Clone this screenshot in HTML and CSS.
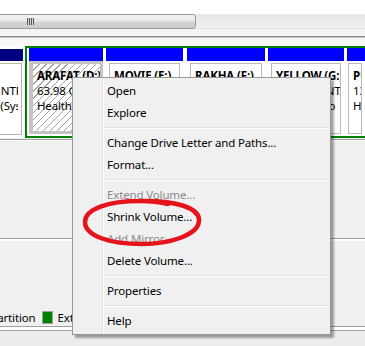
FILE: index.html
```html
<!DOCTYPE html>
<html lang="en">
<head>
  <meta charset="UTF-8" />
  <title>Disk Management</title>
  <link rel="stylesheet" href="styles.css">
</head>
<body>
  <div class="screen">
    <div class="top-gap"></div>
    <div class="hscroll"><div class="thumb"><span class="grip"></span></div></div>
    <div class="band"></div>
    <div class="rule"></div>
    <div class="band light"></div>

    <div class="disk">
      <div class="sys">
        <div class="vhead navy"></div>
        <div class="sys-body"><div class="sys-text"><div class="sys-clip"><b>(C:)</b><span class="l2">50.00 GB NTFS</span><span class="l3">Healthy (System, Boot)</span></div></div></div>
      </div>
      <div class="ext">
        <div class="vol w74 selected">
          <div class="vhead"></div>
          <div class="vbody"><div class="vbox"><b>ARAFAT (D:)</b><span>63.98 GB NTFS</span><span>Healthy (Logical Drive)</span></div></div>
        </div>
        <div class="vol w77">
          <div class="vhead"></div>
          <div class="vbody"><div class="vbox"><b>MOVIE (E:)</b><span>97.66 GB NTFS</span><span>Healthy (Logical Drive)</span></div></div>
        </div>
        <div class="vol w78">
          <div class="vhead"></div>
          <div class="vbody"><div class="vbox"><b>RAKHA (F:)</b><span>97.66 GB NTFS</span><span>Healthy (Logical Drive)</span></div></div>
        </div>
        <div class="vol w76">
          <div class="vhead"></div>
          <div class="vbody"><div class="vbox"><b>YELLOW (G:)</b><span>97.66 GB NTFS</span><span>Healthy (Lo</span></div></div>
        </div>
        <div class="vol last">
          <div class="vhead"></div>
          <div class="vbody"><div class="vbox"><b>PUBLIC (H:)</b><span>136.7 GB NTFS</span><span>Healthy (Logical Drive)</span></div></div>
        </div>
      </div>
    </div>

    <div class="lower">
      <div class="empty"></div>
      <div class="hline"></div>
      <div class="empty short"></div>
      <div class="legend">
        <div class="legend-row">
          <span class="swatch navy"></span><span>Primary partition</span>
          <span class="swatch green"></span><span>Extended partition</span>
        </div>
      </div>
      <div class="frame-lines"></div>
      <div class="bottom"></div>
    </div>

    <div class="menu">
      <div class="item">Open</div>
      <div class="item">Explore</div>
      <div class="sep"></div>
      <div class="item">Change Drive Letter and Paths...</div>
      <div class="item">Format...</div>
      <div class="sep"></div>
      <div class="item off">Extend Volume...</div>
      <div class="item">Shrink Volume...</div>
      <div class="item off">Add Mirror...</div>
      <div class="item">Delete Volume...</div>
      <div class="sep"></div>
      <div class="item">Properties</div>
      <div class="sep"></div>
      <div class="item">Help</div>
    </div>

    <svg class="circle" width="126" height="50" viewBox="0 0 126 50">
      <path d="M60 3 C 96 2, 120 10, 119 23 C 118 37, 90 46, 62 46 C 30 46, 5 38, 5 24 C 5 11, 28 3, 60 3 C 70 3, 80 4, 88 6" fill="none" stroke="#e5141c" stroke-width="4.5" stroke-linecap="round"/>
    </svg>
  </div>
</body>
</html>
```
FILE: styles.css
```css
*{margin:0;padding:0;box-sizing:border-box}
body{background:#f0f0f0;font-family:"Noto Sans","Open Sans",sans-serif;font-size:11.5px;letter-spacing:-.15px;color:#000}
.screen{position:relative;width:365px;height:346px;overflow:hidden;background:#f0f0f0}

/* scroll strip at the top */
.top-gap{height:14px;background:#fff}
.hscroll{height:15px;background:linear-gradient(#e6e6e6,#f0f0f0);border-bottom:1px solid #e2e2e2}
.thumb{width:199px;height:15px;margin-left:-3px;border:1px solid #9a9a9a;border-radius:3px;background:linear-gradient(#f4f4f4 0,#e8e8e8 45%,#d4d4d4 55%,#cbcbcb 100%);position:relative}
.grip{position:absolute;left:29px;top:3px;width:7px;height:7px;background:repeating-linear-gradient(90deg,#555 0 1px,#d8d8d8 1px 2px)}
.band{height:7px;background:#f4f4f4}
.band.light{height:8px;background:#f7f7f7}
.rule{height:2px;background:#8a8a8a;border-bottom:1px solid #c4c4c4}

/* disk row */
.disk{display:flex;height:93px;background:#fff;border-bottom:1px solid #f0f0f0}
.sys{width:23px;flex:none;margin-right:2px;padding-top:3px;display:flex;flex-direction:column;overflow:hidden}
.vhead{height:13px;background:#0000ff;flex:none}
.vhead.navy{height:12px;background:#000080}
.sys-body{flex:1;background:#fff;padding:2px 1px 3px 0;display:flex;min-width:0}
.sys-body .sys-text{flex:1;min-width:0;border:1px solid #b4b4b4;border-left:none;padding-top:4px;display:flex}
.sys-clip{flex:1;min-width:0;overflow:hidden;margin-right:3px}
.sys-text b,.sys-text span,.vbox b,.vbox span{display:block;white-space:nowrap;line-height:15px}
.sys-text b{margin-left:-47px}
.sys-text .l2{margin-left:-49px}
.sys-text .l3{margin-left:-43px}

.ext{flex:1;display:flex;gap:3px;border:2px solid #008000;border-right:none;padding-left:2px;background:#fff;min-width:0}
.vol{display:flex;flex-direction:column;flex:none}
.w74{width:74px}.w77{width:77px;margin-right:1px}.w78{width:78px}.w76{width:76px}
.vol.last{flex:1;min-width:0}
.vbody{flex:1;padding:2px 3px 2px 3px;display:flex;min-height:0}
.vol.last .vbody{padding-left:1px}
.vbox{flex:1;border:1px solid #b9b9b9;background:#fff;overflow:hidden;padding:4px 0 0 4px;min-width:0}
.vbox b{font-weight:700}
.selected .vbody{background:#c4c4c4;padding:3px 3px 3px 4px;margin-bottom:2px}
.selected .vbox{border:none;padding:4px 0 0 4px;background:#fff repeating-linear-gradient(135deg,#fff 0 4px,#a6a6a6 4px 5px)}

/* lower area */
.lower{display:flex;flex-direction:column;height:207px;border-top:1px solid #a0a0a0}
.empty{height:98px;border-top:1px solid #fff}
.empty.short{height:68px}
.hline{height:2px;border-top:1px solid #a0a0a0;border-bottom:1px solid #fff}
.legend{height:18px;overflow:hidden;display:flex;align-items:center}
.legend-row{display:flex;align-items:center;gap:5px;margin-left:-70px;white-space:nowrap}
.legend-row span:nth-child(3){margin-left:1px}
.swatch{width:11px;height:13px;border:1px solid #a0a0a0;flex:none}
.swatch.navy{background:#000080}
.swatch.green{background:#008000}
.frame-lines{height:5px;border-top:1px solid #a0a0a0;border-bottom:1px solid #a0a0a0;background:#fff}
.bottom{flex:1;background:#efedeb}

/* context menu */
.menu{position:absolute;left:72px;top:77px;width:259px;padding:2px 0;border:1px solid #979797;background:#f0f0f0 linear-gradient(90deg,#f0f0f0 0 29px,#e2e3e3 29px 30px,#fff 30px 31px,#f0f0f0 31px);box-shadow:3px 3px 2px rgba(0,0,0,.35)}
.item{height:22px;line-height:22px;padding-left:34px;white-space:nowrap}
.item.off{color:#8b8b8b}
.sep{height:8px;margin:0 2px 0 31px;background:linear-gradient(transparent 0 3px,#e0e0e0 3px 4px,#fff 4px 5px,transparent 5px)}

.circle{position:absolute;left:80px;top:198px}
```
